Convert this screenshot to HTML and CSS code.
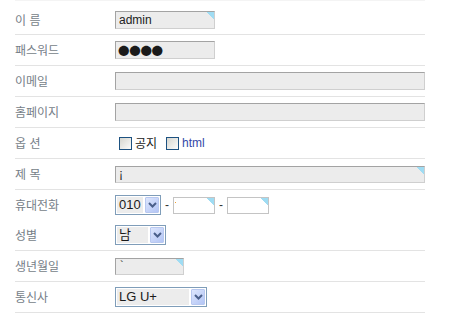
FILE: index.html
```html
<!DOCTYPE html>
<html lang="ko">
<head>
<meta charset="utf-8">
<link rel="stylesheet" href="styles.css">
</head>
<body>
<div class="form">
  <div class="row first">
    <div class="label">이 름</div>
    <div class="field"><span class="box w100 corner">admin</span></div>
  </div>
  <div class="row">
    <div class="label">패스워드</div>
    <div class="field"><span class="box w100 pw">●●●●</span></div>
  </div>
  <div class="row">
    <div class="label">이메일</div>
    <div class="field"><span class="box wfull"></span></div>
  </div>
  <div class="row">
    <div class="label">홈페이지</div>
    <div class="field"><span class="box wfull"></span></div>
  </div>
  <div class="row">
    <div class="label">옵 션</div>
    <div class="field opts">
      <span class="check"></span><span class="opt">공지</span>
      <span class="check"></span><span class="opt link">html</span>
    </div>
  </div>
  <div class="row">
    <div class="label">제 목</div>
    <div class="field"><span class="box wfull short corner">¡</span></div>
  </div>
  <div class="row nob">
    <div class="label">휴대전화</div>
    <div class="field phone">
      <span class="select"><span class="val v26">010</span><span class="btn"><svg width="9" height="6" viewBox="0 0 9 6"><path d="M1 1 L4.5 4.5 L8 1" fill="none" stroke="#4a5f8a" stroke-width="2"/></svg></span></span>
      <span class="dash">-</span>
      <span class="box pbox corner"><i class="dot"></i></span>
      <span class="dash">-</span>
      <span class="box pbox corner"></span>
    </div>
  </div>
  <div class="row">
    <div class="label">성별</div>
    <div class="field"><span class="select"><span class="val v31">남</span><span class="btn"><svg width="9" height="6" viewBox="0 0 9 6"><path d="M1 1 L4.5 4.5 L8 1" fill="none" stroke="#4a5f8a" stroke-width="2"/></svg></span></span></div>
  </div>
  <div class="row">
    <div class="label">생년월일</div>
    <div class="field"><span class="box birth corner">`</span></div>
  </div>
  <div class="row">
    <div class="label">통신사</div>
    <div class="field"><span class="select"><span class="val v72">LG U+</span><span class="btn"><svg width="9" height="6" viewBox="0 0 9 6"><path d="M1 1 L4.5 4.5 L8 1" fill="none" stroke="#4a5f8a" stroke-width="2"/></svg></span></span></div>
  </div>
</div>
</body>
</html>
```

FILE: styles.css
```css
html, body {
  margin: 0;
  padding: 0;
  background: #fff;
}
body {
  font-family: "Noto Sans CJK KR", "Liberation Sans", sans-serif;
  font-size: 12px;
}
.form {
  width: 410px;
  margin-left: 15px;
  border-top: 1px solid #f4f4f4;
}
.row {
  display: flex;
  align-items: center;
  height: 30px;
  border-bottom: 1px solid #e3e3e3;
}
.row.first {
  height: 34px;
  box-sizing: border-box;
  padding-top: 4px;
}
.row.nob {
  border-bottom: none;
}
.label {
  width: 100px;
  flex: none;
  color: #767e88;
  font-size: 12px;
  line-height: 14px;
}
.field {
  display: flex;
  align-items: center;
  flex: 1;
}
.box {
  display: block;
  box-sizing: border-box;
  height: 18px;
  border: 1px solid;
  border-color: #a3a3a3 #cfcfcf #cfcfcf #a3a3a3;
  background: #ececec;
  font-family: "Liberation Sans", "DejaVu Sans", sans-serif;
  font-size: 12px;
  line-height: 16px;
  color: #222;
  padding-left: 3px;
}
.corner {
  background: linear-gradient(225deg, #9fdcf3 0 5px, #ececec 5px);
}
.w100 { width: 100px; }
.wfull { width: 310px; }
.short { height: 17px; line-height: 15px; }
.pw {
  font-family: "Noto Sans CJK KR", sans-serif;
  font-size: 11.5px;
  color: #1a1a1a;
  letter-spacing: -0.3px;
  padding-left: 2px;
}
.opts {
  padding-left: 4px;
}
.check {
  display: block;
  width: 13px;
  height: 13px;
  box-sizing: border-box;
  border: 1px solid #1d5281;
  background: linear-gradient(135deg, #d6d6cf, #fcfcfb);
}
.opt {
  margin-left: 3px;
  margin-right: 9px;
  color: #222;
  font-size: 12px;
  line-height: 14px;
}
.opt.link {
  color: #3448a8;
  font-family: "Liberation Sans", sans-serif;
  font-size: 12px;
}
.select {
  display: flex;
  align-items: stretch;
  box-sizing: border-box;
  height: 20px;
  padding: 1px;
  border: 1px solid #7f9db9;
  background: #fff;
}
.val {
  display: block;
  background: #ececec;
  margin-right: 2px;
  padding-left: 2px;
  font-family: "Liberation Sans", "Noto Sans CJK KR", sans-serif;
  font-size: 13px;
  line-height: 16px;
  color: #1a1a1a;
}
.v26 { width: 24px; }
.v31 { width: 29px; }
.v72 { width: 70px; }
.btn {
  display: flex;
  align-items: center;
  justify-content: center;
  width: 14px;
  box-sizing: border-box;
  border: 1px solid #b8c8f0;
  border-radius: 1px;
  background: linear-gradient(135deg, #dde6fd, #b3c5f5);
}
.phone .box.pbox {
  width: 42px;
  height: 17px;
  background: linear-gradient(225deg, #9fdcf3 0 5px, #fff 5px);
  border-color: #c4c4c4;
  position: relative;
}
.dash {
  width: 12px;
  text-align: center;
  font-family: "Liberation Sans", sans-serif;
  color: #333;
  font-size: 12px;
}
.dot {
  position: absolute;
  left: 1px;
  top: 4px;
  width: 1px;
  height: 1px;
  background: #f0a030;
}
.birth {
  width: 69px;
  height: 17px;
  line-height: 12px;
  font-size: 11px;
  padding-left: 4px;
}
```
